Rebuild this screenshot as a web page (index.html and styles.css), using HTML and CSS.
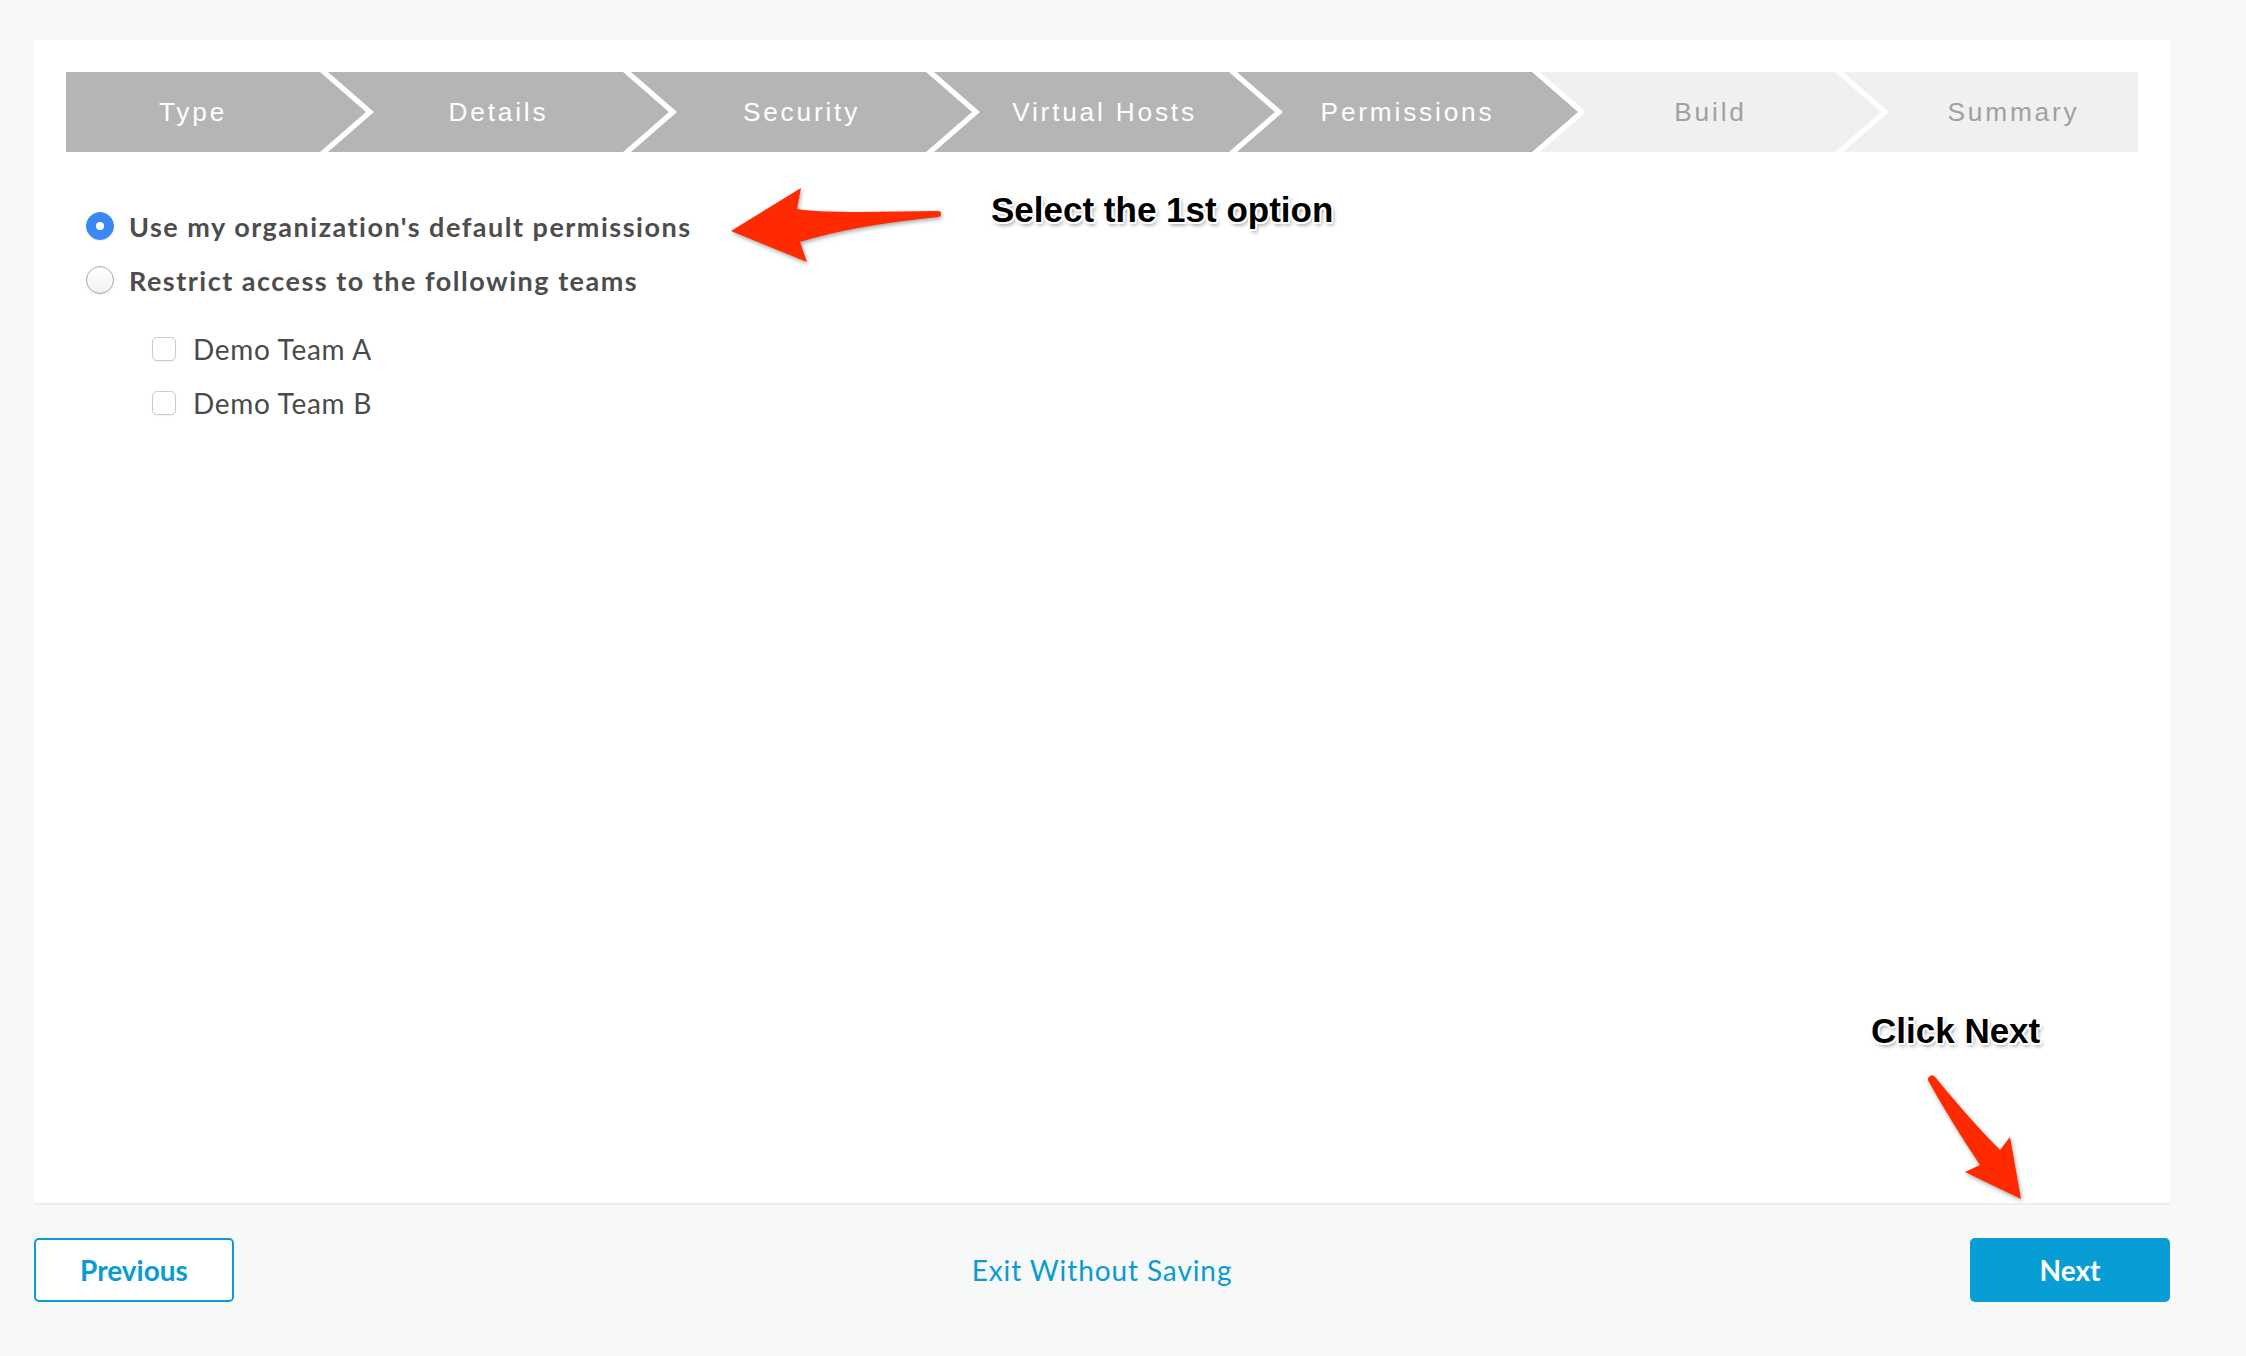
FILE: index.html
```html
<!DOCTYPE html>
<html lang="en">
<head>
<meta charset="utf-8">
<title>Permissions</title>
<link rel="stylesheet" href="styles.css">
</head>
<body>
<div class="page">
  <main class="panel">
    <ol class="steps">
      <li class="step done">Type</li>
      <li class="step done">Details</li>
      <li class="step done">Security</li>
      <li class="step done">Virtual Hosts</li>
      <li class="step done">Permissions</li>
      <li class="step todo">Build</li>
      <li class="step todo">Summary</li>
    </ol>
    <div class="options">
      <label class="radio-row"><span class="radio checked"></span><span class="radio-label">Use my organization's default permissions</span></label>
      <label class="radio-row"><span class="radio"></span><span class="radio-label">Restrict access to the following teams</span></label>
      <div class="teams">
        <label class="check-row"><span class="checkbox"></span><span class="check-label">Demo Team A</span></label>
        <label class="check-row"><span class="checkbox"></span><span class="check-label">Demo Team B</span></label>
      </div>
    </div>
  </main>
  <footer class="footer">
    <button class="btn btn-outline">Previous</button>
    <a class="exit-link">Exit Without Saving</a>
    <button class="btn btn-primary">Next</button>
  </footer>
</div>

<svg class="annotations" width="2246" height="1356" viewBox="0 0 2246 1356" xmlns="http://www.w3.org/2000/svg">
  <path class="arrow" d="M731,231 L801,188 L797,209 Q812,212 860,212 L938,211 A3,3 0 0 1 938,217 Q850,226 800,242 L807,262 Z"/>
  <path class="arrow" d="M2021,1199 L1965,1172 L1980,1165 Q1950,1120 1929,1082 A3,3 0 0 1 1935,1077 Q1972,1122 2000,1150 L2010,1137 Z"/>
</svg>
<div class="note note-select">Select the 1st option</div>
<div class="note note-next">Click Next</div>
</body>
</html>
```

FILE: styles.css
```css
* { box-sizing: border-box; }

html, body {
  margin: 0;
  padding: 0;
}

body {
  background: #f7f8f8;
  font-family: Lato, "Open Sans", sans-serif;
  color: #4a4a4a;
  position: relative;
}

.page {
  height: 100vh;
  display: flex;
  flex-direction: column;
  padding: 40px 76px 0 34px;
}

.panel {
  flex: 1;
  background: #fff;
  padding: 32px;
  border-bottom: 2px solid #eeeeee;
}

/* step bar */
.steps {
  list-style: none;
  margin: 0;
  padding: 0;
  display: flex;
  height: 80px;
}

.step {
  flex: 0 0 341px;
  margin-left: -38px;
  padding: 0 46px;
  display: flex;
  align-items: center;
  justify-content: center;
  font-family: "Liberation Sans", Arial, sans-serif;
  font-size: 26.25px;
  letter-spacing: 2.8px;
  white-space: nowrap;
  clip-path: polygon(0 0, calc(100% - 46px) 0, 100% 50%, calc(100% - 46px) 100%, 0 100%, 46px 50%);
}

.step:first-child {
  flex-basis: 300px;
  margin-left: 0;
  padding-left: 0;
  clip-path: polygon(0 0, calc(100% - 46px) 0, 100% 50%, calc(100% - 46px) 100%, 0 100%);
}

.step:last-child {
  flex: 1 1 auto;
  padding-right: 0;
  clip-path: polygon(0 0, 100% 0, 100% 100%, 0 100%, 46px 50%);
}

.step.done {
  background: #b5b5b5;
  color: #fff;
}

.step.todo {
  background: #f0f0f0;
  color: #a0a0a0;
}

/* options */
.options {
  margin-top: 47px;
  padding-left: 20px;
}

.radio-row {
  display: flex;
  align-items: center;
  gap: 15px;
  height: 54px;
}

.radio {
  width: 28px;
  height: 28px;
  border-radius: 50%;
  border: 1px solid #a9a9a9;
  background: linear-gradient(#fff, #f1f1f1);
  box-shadow: 0 1px 1px rgba(0,0,0,0.08);
  flex: none;
  display: flex;
  align-items: center;
  justify-content: center;
}

.radio.checked {
  border-color: #3b87f5;
  background: #3b87f5;
}

.radio.checked::after {
  content: "";
  width: 8px;
  height: 8px;
  border-radius: 50%;
  background: #fff;
}

.radio-label {
  font-weight: 700;
  font-size: 27px;
  color: #4d4d4d;
  letter-spacing: 1.5px;
}

.teams {
  margin-top: 15px;
  padding-left: 66px;
}

.check-row {
  display: flex;
  align-items: center;
  gap: 17px;
  height: 54px;
}

.checkbox {
  width: 24px;
  height: 24px;
  border: 1px solid #cccccc;
  border-radius: 5px;
  background: #fff;
  box-shadow: 0 1px 1px rgba(0,0,0,0.06);
  flex: none;
}

.check-label {
  font-size: 28px;
  color: #4a4a4a;
  letter-spacing: 0.7px;
}

/* footer */
.footer {
  display: flex;
  align-items: center;
  justify-content: space-between;
  padding: 33px 0 54px;
}

.btn {
  width: 200px;
  height: 64px;
  border-radius: 5px;
  font-family: Lato, sans-serif;
  font-weight: 700;
  font-size: 28px;
  cursor: pointer;
}

.btn-outline {
  background: #fff;
  border: 2px solid #0a9bd3;
  color: #0a9bd3;
}

.btn-primary {
  background: #089dd4;
  border: 2px solid #089dd4;
  color: #fff;
}

.exit-link {
  font-size: 28px;
  color: #0a9bd3;
  letter-spacing: 0.9px;
}

/* annotations */
.annotations {
  position: absolute;
  left: 0;
  top: 0;
  pointer-events: none;
}

.arrow {
  fill: #ff2a00;
  filter: drop-shadow(1px 2px 2px rgba(0,0,0,0.35));
}

.note {
  position: absolute;
  font-family: "Liberation Sans", Arial, sans-serif;
  font-weight: 700;
  font-size: 35px;
  line-height: 35px;
  color: #000;
  white-space: nowrap;
  text-shadow:
    2px 0 #fff, -2px 0 #fff, 0 2px #fff, 0 -2px #fff,
    1.5px 1.5px #fff, -1.5px 1.5px #fff, 1.5px -1.5px #fff, -1.5px -1.5px #fff,
    2px 3px 4px rgba(0,0,0,0.45);
}

.note-select {
  left: 991px;
  top: 192px;
}

.note-next {
  left: 1871px;
  top: 1013px;
}
```
